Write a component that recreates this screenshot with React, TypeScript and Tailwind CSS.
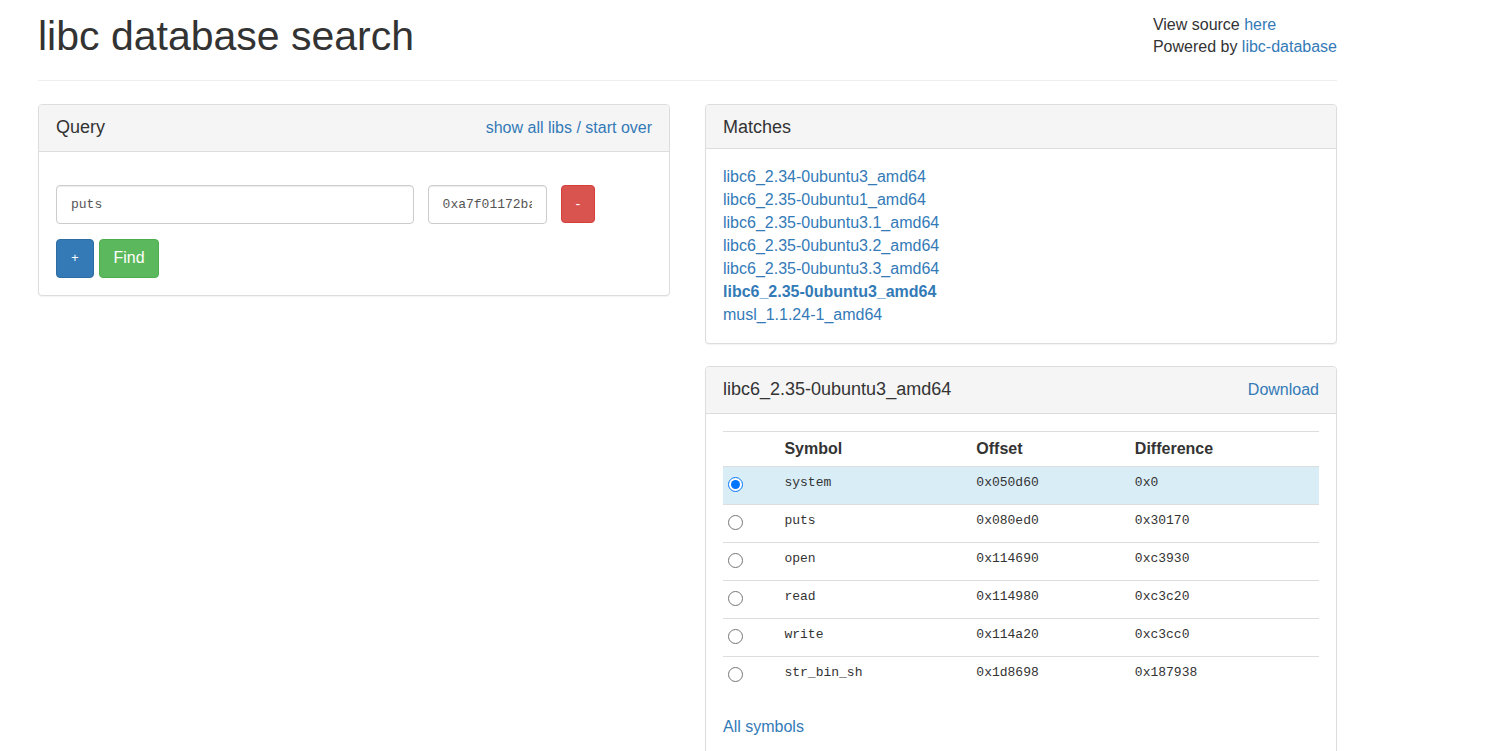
import { useState, type ReactNode } from 'react';

const matches = [
  'libc6_2.34-0ubuntu3_amd64',
  'libc6_2.35-0ubuntu1_amd64',
  'libc6_2.35-0ubuntu3.1_amd64',
  'libc6_2.35-0ubuntu3.2_amd64',
  'libc6_2.35-0ubuntu3.3_amd64',
  'libc6_2.35-0ubuntu3_amd64',
  'musl_1.1.24-1_amd64',
];

const current = 'libc6_2.35-0ubuntu3_amd64';

const symbols = [
  { name: 'system', offset: 0x050d60, label: '0x050d60' },
  { name: 'puts', offset: 0x080ed0, label: '0x080ed0' },
  { name: 'open', offset: 0x114690, label: '0x114690' },
  { name: 'read', offset: 0x114980, label: '0x114980' },
  { name: 'write', offset: 0x114a20, label: '0x114a20' },
  { name: 'str_bin_sh', offset: 0x1d8698, label: '0x1d8698' },
];

const mono = "font-['Liberation_Mono',monospace] text-[13px]";
const link = 'text-[#337ab7] hover:text-[#23527c] hover:underline';
const field = `h-[39px] min-w-0 rounded border border-[#ccc] bg-white px-[14px] text-[#555] shadow-[inset_0_1px_1px_rgba(0,0,0,0.075)] outline-none focus:border-[#66afe9] ${mono}`;
const headCell = 'px-[6px] pt-[5px] pb-[6px] text-left font-bold';
const bodyCell = `px-[6px] pt-[4px] align-top leading-6 ${mono}`;

function Panel({ title, action, children }: { title: string; action?: ReactNode; children: ReactNode }) {
  return (
    <section className="rounded border border-[#ddd] bg-white shadow-[0_1px_1px_rgba(0,0,0,0.05)]">
      <header
        className={`flex justify-between rounded-t-[3px] border-b border-[#ddd] bg-[#f5f5f5] px-[17px] pt-[11px] ${action ? 'pb-3' : 'pb-[9px]'}`}
      >
        <h3 className="text-lg leading-[23px]">{title}</h3>
        {action}
      </header>
      <div className={action ? 'p-[17px]' : 'px-[17px] pt-4 pb-[17px]'}>{children}</div>
    </section>
  );
}

export default function App() {
  const [name, setName] = useState('puts');
  const [address, setAddress] = useState('0xa7f01172bae0');
  const [selected, setSelected] = useState(0);
  const base = symbols[selected].offset;

  const difference = (offset: number) => {
    const d = offset - base;
    return `${d < 0 ? '-' : ''}0x${Math.abs(d).toString(16)}`;
  };

  return (
    <div className="max-w-[1337px] bg-white pb-6 pl-[38px] font-['Liberation_Sans',Arial,sans-serif] text-base leading-[23px] text-[#333]">
      <header className="flex justify-between border-b border-[#eee] pt-[14px] pb-[21px]">
        <h1 className="text-[41px] leading-[45px]">libc database search</h1>
        <p className="leading-[22px]">
          View source <a href="#source" className={link}>here</a>
          <br />
          Powered by <a href="#libc-database" className={link}>libc-database</a>
        </p>
      </header>

      <main className="mt-[23px] grid grid-cols-2 items-start gap-[35px]">
        <Panel title="Query" action={<a href="#start" className={link}>show all libs / start over</a>}>
          <form onSubmit={(e) => e.preventDefault()} className="pt-4">
            <div className="grid grid-cols-[60%_20%_34px] gap-[14px]">
              <input aria-label="Symbol name" className={field} value={name} onChange={(e) => setName(e.target.value)} />
              <input aria-label="Address" className={field} value={address} onChange={(e) => setAddress(e.target.value)} />
              <button type="button" aria-label="Remove" className={`h-[38px] rounded border border-[#d43f3a] bg-[#d9534f] text-white ${mono}`}>
                -
              </button>
            </div>
            <div className="mt-[15px] flex gap-[5px]">
              <button type="button" aria-label="Add" className={`h-[39px] w-[38px] rounded border border-[#2e6da4] bg-[#337ab7] text-white ${mono}`}>
                +
              </button>
              <button type="submit" className="h-[39px] w-[60px] rounded border border-[#4cae4c] bg-[#5cb85c] pb-[2px] text-white">
                Find
              </button>
            </div>
          </form>
        </Panel>

        <div className="grid gap-[22px]">
          <Panel title="Matches">
            <ul>
              {matches.map((m) => (
                <li key={m}>
                  <a href={`#${m}`} className={`${link} ${m === current ? 'font-bold' : ''}`}>{m}</a>
                </li>
              ))}
            </ul>
          </Panel>

          <Panel title={current} action={<a href="#download" className={link}>Download</a>}>
            <table className="w-full table-fixed border-collapse">
              <colgroup>
                <col className="w-[9.3%]" />
                <col className="w-[32.2%]" />
                <col className="w-[26.6%]" />
                <col />
              </colgroup>
              <thead>
                <tr className="border-t border-[#ddd]">
                  <th className={headCell} aria-label="Selected" />
                  <th className={headCell}>Symbol</th>
                  <th className={headCell}>Offset</th>
                  <th className={headCell}>Difference</th>
                </tr>
              </thead>
              <tbody>
                {symbols.map((s, i) => (
                  <tr key={s.name} className={`h-[38px] border-t border-[#ddd] ${i === selected ? 'bg-[#d9edf7]' : ''}`}>
                    <td className="px-[5px] pt-[10px] align-top">
                      <input
                        type="radio"
                        name="symbol"
                        aria-label={s.name}
                        checked={i === selected}
                        onChange={() => setSelected(i)}
                        className="block size-[15px]"
                      />
                    </td>
                    <td className={bodyCell}>{s.name}</td>
                    <td className={bodyCell}>{s.label}</td>
                    <td className={bodyCell}>{difference(s.offset)}</td>
                  </tr>
                ))}
              </tbody>
            </table>
            <p className="mt-5">
              <a href="#symbols" className={link}>All symbols</a>
            </p>
          </Panel>
        </div>
      </main>
    </div>
  );
}
